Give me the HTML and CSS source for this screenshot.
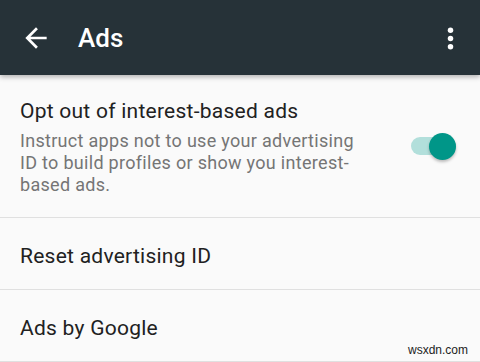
FILE: index.html
```html
<!DOCTYPE html>
<html>
<head>
    <title>Ads</title>
    <link rel="stylesheet" href="styles.css">
</head>
<body>
    <div class="toolbar">
        <svg class="icon back" viewBox="0 0 24 24"><path d="M20 11H7.83l5.59-5.59L12 4l-8 8 8 8 1.41-1.41L7.83 13H20v-2z"/></svg>
        <h1 class="title">Ads</h1>
        <svg class="icon more" viewBox="0 0 24 24"><circle cx="12" cy="6" r="2"/><circle cx="12" cy="12" r="2"/><circle cx="12" cy="18" r="2"/></svg>
    </div>

    <div class="list">
        <div class="item item-switch">
            <div class="item-text">
                <div class="item-title">Opt out of interest-based ads</div>
                <div class="item-summary">Instruct apps not to use your advertising ID to build profiles or show you interest-based ads.</div>
            </div>
            <div class="switch">
                <span class="track"></span>
                <span class="thumb"></span>
            </div>
        </div>
        <div class="item">
            <div class="item-title">Reset advertising ID</div>
        </div>
        <div class="item">
            <div class="item-title">Ads by Google</div>
        </div>
    </div>

    <span class="watermark">wsxdn.com</span>
</body>
</html>
```

FILE: styles.css
```css
body {
    margin: 0;
    background: #fafafa;
    font-family: Roboto, "Noto Sans", sans-serif;
    overflow: hidden;
    height: 362px;
    position: relative;
}
.toolbar {
    height: 75px;
    background: #263238;
    display: flex;
    align-items: center;
    padding: 0 13px 0 20px;
    box-shadow: 0 2px 5px rgba(0, 0, 0, 0.3);
    position: relative;
}
.icon {
    fill: #fff;
    width: 32px;
    height: 32px;
}
.back {
    margin-top: 1px;
}
.title {
    flex: 1;
    margin: 0 0 0 26px;
    color: #fff;
    font-size: 26px;
    font-weight: 500;
    line-height: 32px;
}
.more {
    width: 33px;
    height: 33px;
    margin-top: 1px;
}
.item {
    border-bottom: 1px solid #e0e0e0;
    padding: 24px 20px 19px;
}
.item-switch {
    display: flex;
    align-items: center;
    padding-top: 22px;
    padding-bottom: 21px;
}
.item-text {
    width: 345px;
}
.item-title {
    color: #212121;
    font-size: 21px;
    letter-spacing: 0.25px;
    line-height: 28px;
}
.item-summary {
    color: #757575;
    font-size: 18px;
    letter-spacing: 0.3px;
    line-height: 22px;
    margin-top: 5px;
}
.switch {
    position: relative;
    width: 45px;
    height: 27px;
    margin-left: 46px;
    margin-top: -1px;
}
.track {
    position: absolute;
    left: 0;
    top: 4px;
    width: 45px;
    height: 18px;
    border-radius: 9px;
    background: #b2dfdb;
}
.thumb {
    position: absolute;
    right: 0;
    top: 0;
    width: 27px;
    height: 27px;
    border-radius: 50%;
    background: #009688;
    box-shadow: 0 2px 3px rgba(0, 0, 0, 0.25);
}
.watermark {
    position: absolute;
    right: 12px;
    bottom: 5px;
    font-family: "Liberation Sans", Arial, sans-serif;
    font-size: 12px;
    color: #222;
}
```
